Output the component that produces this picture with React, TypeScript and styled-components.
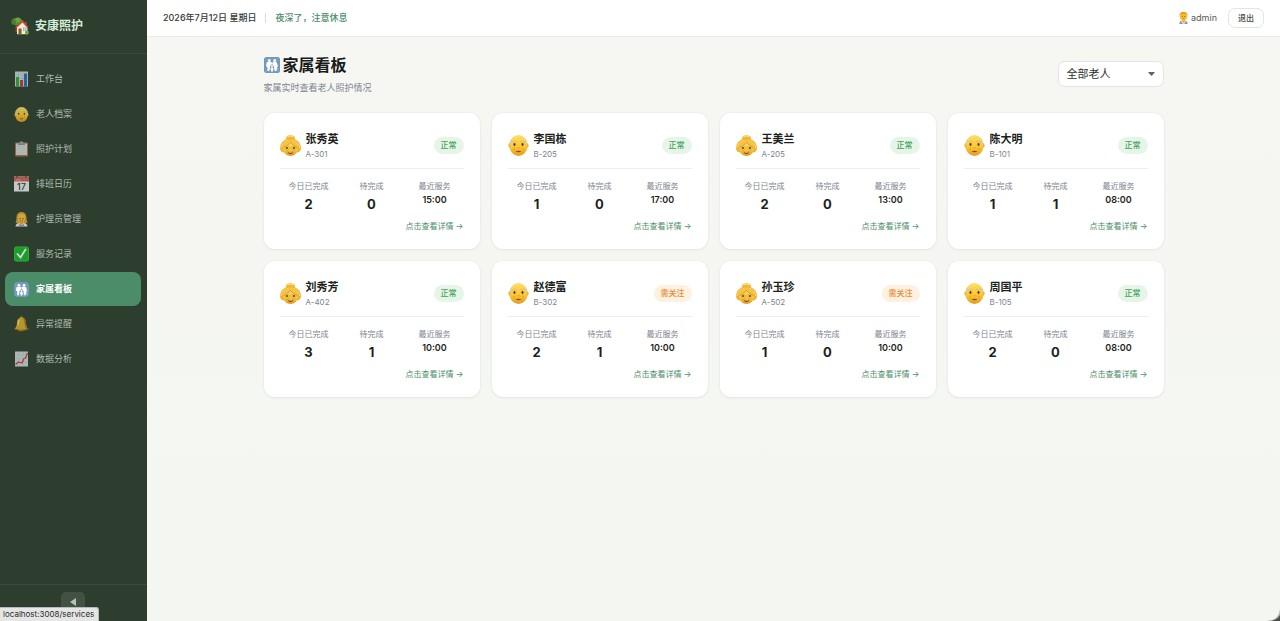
import React, { useId, useState } from "react";
import styled, { createGlobalStyle } from "styled-components";

const GlobalStyle = createGlobalStyle`
  *, *::before, *::after { box-sizing: border-box; }
  body {
    margin: 0;
    font-family: Inter, "Noto Sans CJK SC", sans-serif;
    font-size: 9px;
    line-height: 12px;
    color: #1c1f1c;
    background: #f5f6f1;
  }
  button, select { font-family: inherit; }
  h1, h2, p, dl, dd { margin: 0; padding: 0; }
`;

const Shell = styled.div`
  display: flex;
  min-height: 100vh;
`;

const Sidebar = styled.aside`
  display: flex;
  flex-direction: column;
  flex: none;
  width: 147px;
  background: #2d3e2e;
`;

const Brand = styled.div`
  display: flex;
  align-items: center;
  gap: 6px;
  height: 54px;
  padding: 0 11px 2px;
  border-bottom: 1px solid #3a4a3b;
  color: #d4ecd9;
  font-size: 12px;
  font-weight: 600;
  line-height: 18px;
`;

const NavList = styled.nav`
  display: flex;
  flex: 1;
  flex-direction: column;
  gap: 1px;
  padding: 8px 6px 8px 5px;
`;

const NavLink = styled.a<{ $active: boolean }>`
  display: flex;
  align-items: center;
  gap: 7px;
  height: 34px;
  padding: 0 9px;
  border-radius: 8px;
  background: ${(p) => (p.$active ? "#4b8c69" : "transparent")};
  color: ${(p) => (p.$active ? "#ffffff" : "#b2bab2")};
  font-weight: ${(p) => (p.$active ? 700 : 400)};
  text-decoration: none;

  svg { opacity: ${(p) => (p.$active ? 1 : 0.8)}; }
`;

const SidebarFooter = styled.div`
  display: flex;
  justify-content: center;
  padding: 7px 9px 9px 8px;
  border-top: 1px solid #3a4a3b;
`;

const CollapseButton = styled.button`
  display: flex;
  align-items: center;
  justify-content: center;
  width: 24px;
  height: 20px;
  padding: 0;
  border: 0;
  border-radius: 5px;
  background: #425142;
  color: #b9c1b9;
`;

const Page = styled.div`
  display: flex;
  flex: 1;
  flex-direction: column;
  min-width: 0;
`;

const TopBar = styled.header`
  display: flex;
  align-items: center;
  justify-content: space-between;
  height: 37px;
  padding: 0 16px 1px;
  border-bottom: 1px solid #ebece7;
  background: #ffffff;
`;

const TopGroup = styled.div<{ $gap: number }>`
  display: flex;
  align-items: center;
  gap: ${(p) => p.$gap}px;
`;

const DateText = styled.time`
  color: #353a36;
  font-weight: 500;
`;

const Separator = styled.span`
  width: 1px;
  height: 10px;
  background: #dcded9;
`;

const Greeting = styled.span`
  color: #4b8c69;
  font-weight: 500;
`;

const User = styled.span`
  display: flex;
  align-items: center;
  gap: 2px;
  color: #555b56;
`;

const LogoutButton = styled.button`
  height: 20px;
  padding: 0 9px;
  border: 1px solid #e4e5e0;
  border-radius: 7px;
  background: #ffffff;
  color: #454a46;
  font-size: 8px;
  font-weight: 500;
  line-height: 12px;
`;

const Main = styled.main`
  flex: 1;
  padding: 16px;
  background: linear-gradient(180deg, #f6f6f2, #f4f7f1);
`;

const Content = styled.div`
  max-width: 900px;
  margin: 0 auto;
`;

const PageHeader = styled.div`
  display: flex;
  align-items: center;
  justify-content: space-between;
  margin-bottom: 18px;
`;

const Title = styled.h1`
  display: flex;
  align-items: center;
  gap: 3px;
  color: #181b18;
  font-size: 16px;
  font-weight: 700;
  line-height: 24px;
`;

const Subtitle = styled.p`
  margin-top: 4px;
  color: #7c8490;
  line-height: 14px;
`;

const SelectBox = styled.div`
  position: relative;
  width: 106px;

  svg {
    position: absolute;
    top: 11px;
    right: 9px;
    pointer-events: none;
  }
`;

const Select = styled.select`
  appearance: none;
  width: 100%;
  height: 26px;
  padding: 0 24px 0 8px;
  border: 1px solid #e4e5e0;
  border-radius: 7px;
  background: #ffffff;
  color: #2e332f;
  font-size: 11px;
`;

const CardGrid = styled.section`
  display: grid;
  grid-template-columns: repeat(auto-fill, minmax(200px, 1fr));
  gap: 12px;
`;

const Card = styled.article`
  padding: 17px 16px;
  border-radius: 11px;
  background: #ffffff;
  box-shadow: 0 0 0 1px rgba(40, 60, 40, 0.02), 0 1px 3px rgba(40, 60, 40, 0.07);
`;

const CardHeader = styled.div`
  display: flex;
  align-items: center;
  gap: 5px;
  padding-bottom: 8px;
  border-bottom: 1px solid #eff0ee;
`;

const Identity = styled.div`
  flex: 1;
`;

const ElderName = styled.h2`
  color: #1c1f1c;
  font-size: 11px;
  font-weight: 600;
  line-height: 18px;
`;

const Room = styled.p`
  color: #7c8490;
  font-size: 8px;
`;

const Badge = styled.span<{ $alert: boolean }>`
  padding: 2px 7px 3px;
  border-radius: 9px;
  background: ${(p) => (p.$alert ? "#fff1e0" : "#e7f5e9")};
  color: ${(p) => (p.$alert ? "#ea8a35" : "#41a35a")};
  font-size: 8px;
  font-weight: 500;
`;

const Stats = styled.dl`
  display: grid;
  grid-template-columns: repeat(3, 1fr);
  gap: 5px;
  margin-top: 11px;
  text-align: center;
`;

const StatLabel = styled.dt`
  color: #7c8490;
  font-size: 8px;
`;

const StatValue = styled.dd<{ $time?: boolean }>`
  margin-top: 3px;
  color: #1c1f1c;
  font-size: ${(p) => (p.$time ? 9 : 13)}px;
  font-weight: ${(p) => (p.$time ? 600 : 700)};
  line-height: ${(p) => (p.$time ? 10 : 18)}px;
`;

const DetailRow = styled.div`
  display: flex;
  justify-content: flex-end;
  margin-top: 7px;
`;

const DetailLink = styled.a`
  color: #4b8c69;
  font-size: 8px;
  text-decoration: none;
`;

const StatusUrl = styled.div`
  position: fixed;
  bottom: 0;
  left: 0;
  padding: 0 4px 1px 3px;
  border: 1px solid #b9bbb9;
  border-width: 1px 1px 0 0;
  border-radius: 0 3px 0 0;
  background: #e4e5e4;
  color: #2b2d2b;
  font-size: 8px;
`;

const WindowCorner = styled.svg`
  position: fixed;
  right: 0;
  bottom: 0;
`;

const HouseIcon = () => (
  <svg width="18" height="18" viewBox="0 0 36 36" aria-hidden="true">
    <path d="M9 16h4v14H9z" fill="#79512f" />
    <ellipse cx="12" cy="9" rx="11" ry="7.500" fill="#568d31" />
    <circle cx="5" cy="11" r="4.500" fill="#477e2b" />
    <circle cx="14" cy="6" r="5" fill="#6ba343" />
    <path d="M28 10h3v9h-3z" fill="#a9533d" />
    <path d="M12 20L23 9l10 11v14H12z" fill="#f6ead0" />
    <path d="M9 20L22 7q1-1 2 0l11 13-2 2L23 11 11 22z" fill="#c94734" />
    <path d="M15 23h6v11h-6z" fill="#925231" />
    <path d="M24 21h7v7h-7z" fill="#70aecf" />
    <path d="M27.500 21v7M24 24.500h7" stroke="#fff" />
    <circle cx="32" cy="31" r="4" fill="#6fa83a" />
    <path d="M12 34h22v1H12z" fill="#729452" />
  </svg>
);

const BarsIcon = () => (
  <svg width="15" height="16" viewBox="0 0 30 32" aria-hidden="true">
    <path d="M2 1h26v30H2z" fill="#c7d3d8" />
    <path d="M2 8h26M2 15h26M2 22h26M9 1v30M18 1v30" stroke="#aab9c0" />
    <path d="M4 12h6v19H4z" fill="#2eaa37" />
    <path d="M12 18h6v13h-6z" fill="#c93737" />
    <path d="M20 5h6v26h-6z" fill="#286bb6" />
  </svg>
);

const FaceGradient = ({ id }: { id: string }) => (
  <defs>
    <linearGradient id={id} x1="0" y1="0" x2="0" y2="1">
      <stop offset="0" stopColor="#ffdf66" />
      <stop offset="0.6" stopColor="#fcc431" />
      <stop offset="1" stopColor="#e09a20" />
    </linearGradient>
  </defs>
);

const OldManIcon = ({ size }: { size: number }) => {
  const id = useId();
  return (
    <svg width={size} height={size} viewBox="0 0 42 42" aria-hidden="true">
      <FaceGradient id={id} />
      <ellipse cx="3.500" cy="21" rx="2.500" ry="4.500" fill="#e5a526" />
      <ellipse cx="38.500" cy="21" rx="2.500" ry="4.500" fill="#e5a526" />
      <rect x="3" y="0" width="36" height="42" rx="18" ry="20" fill={`url(#${id})`} />
      <path d="M4 21q-2-9 4-13 1 6-3 13zM38 21q2-9-4-13-1 6 3 13z" fill="#d9cda4" />
      <path d="M9 14q4-3 8-1M25 13q4-2 8 1" fill="none" stroke="#d8bf7c" strokeWidth="2" strokeLinecap="round" />
      <ellipse cx="13" cy="19" rx="2" ry="2.800" fill="#4d3517" />
      <ellipse cx="29" cy="19" rx="2" ry="2.800" fill="#4d3517" />
      <path d="M19 25q2 2 4 0M11 29q1-3 3-4M31 29q-1-3-3-4" fill="none" stroke="#cd8b1d" strokeWidth="1.300" />
      <path d="M15 33q6-3 12 0-6 3-12 0z" fill="#8b4a1c" />
    </svg>
  );
};

const OldWomanIcon = () => {
  const id = useId();
  return (
    <svg width="21" height="21" viewBox="0 0 42 42" aria-hidden="true">
      <FaceGradient id={id} />
      <ellipse cx="21" cy="6" rx="9" ry="5.500" fill="#f0b733" />
      <path d="M14 4q7-4 14 0" fill="none" stroke="#ffe484" strokeWidth="2" />
      <path d="M21 7C8 7 0 16 0 26c0 6 4 9 9 9h24c5 0 9-3 9-9C42 16 34 7 21 7z" fill="#f0b331" />
      <path d="M2 26q2-12 15-16M40 26Q38 14 25 10" fill="none" stroke="#ffdc72" strokeWidth="2" />
      <ellipse cx="21" cy="27" rx="15" ry="15" fill={`url(#${id})`} />
      <path d="M5 25q1-13 16-16 15 3 16 16-9-3-16-10-7 7-16 10z" fill="#f6c445" />
      <path d="M7 25q8-3 14-10 6 7 14 10" fill="none" stroke="#cf8c20" strokeWidth="1.500" />
      <g fill="none" stroke="#b9a576" strokeWidth="1">
        <circle cx="14" cy="26" r="4.500" />
        <circle cx="28" cy="26" r="4.500" />
        <path d="M18.500 26q2.500-2 5 0" />
      </g>
      <ellipse cx="14" cy="26" rx="1.800" ry="2.200" fill="#4a3119" />
      <ellipse cx="28" cy="26" rx="1.800" ry="2.200" fill="#4a3119" />
      <path d="M15 33q6 2 12 0-1 5-6 5t-6-5z" fill="#8a3a1e" />
      <path d="M17 34q4 1 8 0v1q-4 1-8 0z" fill="#fff" />
    </svg>
  );
};

const ClipboardIcon = () => (
  <svg width="15" height="16" viewBox="0 0 30 32" aria-hidden="true">
    <rect x="2" y="3" width="26" height="28" rx="2" fill="#a9713c" />
    <path d="M4 5h22v23H4z" fill="#d3d7d6" />
    <path d="M7 11h16M7 15h16M7 19h16M7 23h16" stroke="#c1c6c6" />
    <path d="M9 3h3q0-3 3-3t3 3h3l1 5H8z" fill="#858d91" />
    <path d="M11 4h8" stroke="#d8dddf" />
  </svg>
);

const CalendarIcon = () => (
  <svg width="15" height="16" viewBox="0 0 30 32" aria-hidden="true">
    <path d="M0 1h30v30H0z" fill="#eceeed" />
    <path d="M0 1h30v10H0z" fill="#c9625a" />
    <path d="M6 0v4M24 0v4" stroke="#6e4b48" strokeWidth="3" />
    <path d="M4 8h9" stroke="#e3a09a" strokeWidth="2" />
    <text x="15" y="28" textAnchor="middle" fontFamily="Inter, sans-serif" fontSize="18" fontWeight="500" fill="#303634">17</text>
  </svg>
);

const NurseIcon = () => (
  <svg width="15" height="16" viewBox="0 0 30 32" aria-hidden="true">
    <path d="M15 2C8 2 5 7 5 13q0 6-2 10 6 4 12 3 6 1 12-3-2-4-2-10c0-6-3-11-10-11z" fill="#d99a2b" />
    <path d="M3 31q0-6 7-7h10q7 1 7 7z" fill="#e9ecef" />
    <path d="M12 21h6v4l-3 3-3-3z" fill="#e3a726" />
    <path d="M10 25l5 4 5-4-1 6h-8z" fill="#a874b5" />
    <ellipse cx="15" cy="15" rx="7" ry="8.500" fill="#fbc83c" />
    <path d="M7 15Q7 5 15 5t8 10q-5-2-7-7-3 5-9 7z" fill="#eebd4c" />
    <circle cx="12" cy="15.500" r="1.300" fill="#58401d" />
    <circle cx="18" cy="15.500" r="1.300" fill="#58401d" />
    <path d="M12 19.500q3 2 6 0" stroke="#a44625" fill="none" strokeWidth="1.500" />
  </svg>
);

const CheckIcon = () => (
  <svg width="15" height="16" viewBox="0 0 30 32" aria-hidden="true">
    <rect y="1" width="30" height="30" rx="5" fill="#17b52b" />
    <rect x="1" y="2" width="28" height="28" rx="4" fill="none" stroke="#4bd150" />
    <path d="M7 16l6 7L23 7" fill="none" stroke="#fff" strokeWidth="3.500" strokeLinecap="round" />
  </svg>
);

const FamilyIcon = ({ size }: { size: number }) => (
  <svg width={size} height={size} viewBox="0 0 32 32" aria-hidden="true">
    <rect width="32" height="32" rx="6" fill="#557c9f" />
    <rect x="1.500" y="1.500" width="29" height="29" rx="5" fill="#7199bd" stroke="#9dbfd9" />
    <g fill="#fff">
      <circle cx="10.500" cy="7" r="3" />
      <circle cx="21.500" cy="7" r="3" />
      <path d="M5 12q0-2 2-2h7q2 0 2 2l-1 6-3 2-1 8H7l-.5-9L4 19zM16.500 12q0-2 2-2h5q2 0 2.500 2l2 7-2 1 1 5h-2v3h-4l-1-8-3-2z" />
    </g>
    <path d="M11.500 28l1-10q3-5 7 0l1 10z" fill="#7199bd" />
    <g fill="#fff">
      <circle cx="16" cy="18.500" r="2" />
      <path d="M14 21h4l1.500 4h-1.500v4h-4v-4h-1.500z" />
    </g>
  </svg>
);

const BellIcon = () => (
  <svg width="15" height="16" viewBox="0 0 30 32" aria-hidden="true">
    <circle cx="15" cy="3" r="2.500" fill="#b88016" />
    <ellipse cx="14" cy="28" rx="4" ry="3" fill="#8d6018" />
    <path d="M15 3c-6 0-9 4-9 10 0 6-2 10-5 13 8 4 20 4 28 0-4-3-5-7-5-13S21 3 15 3z" fill="#d9ad2b" />
    <path d="M18 5c4 4 3 15 7 21l4 0c-4-3-5-7-5-13 0-5-2-8-6-8z" fill="#9c6e1b" />
    <path d="M10 8q-2 5-2 10" stroke="#fff09a" strokeWidth="2" fill="none" />
    <path d="M1 26q14 5 28 0" fill="none" stroke="#8f6218" strokeWidth="1.500" />
  </svg>
);

const TrendIcon = () => (
  <svg width="15" height="16" viewBox="0 0 30 32" aria-hidden="true">
    <path d="M2 1h26v30H2z" fill="#cbd6d9" />
    <path d="M2 8h26M2 15h26M2 22h26M9 1v30M18 1v30" stroke="#b4c2c7" />
    <path d="M3 27l6-5 7 2 4-9 3-1 4-10" fill="none" stroke="#cb3838" strokeWidth="2.500" strokeLinejoin="round" />
  </svg>
);

const StaffIcon = () => (
  <svg width="11" height="12" viewBox="0 0 22 24" aria-hidden="true">
    <path d="M2 24q0-6 5-7h8q5 1 5 7z" fill="#d5dadd" />
    <path d="M3 24q0-4 3-6l3 6zM19 24q0-4-3-6l-3 6z" fill="#8b979d" />
    <path d="M8 14h6v4l-3 3-3-3z" fill="#efa91e" />
    <ellipse cx="11" cy="8.500" rx="7.500" ry="8.500" fill="#ffc12f" />
    <path d="M3 8Q3 0 11 0t8 8q-2-4-4-4-4 1-8 0-2 1-4 4z" fill="#e39d1f" />
    <circle cx="8.500" cy="8.500" r="1" fill="#54401d" />
    <circle cx="13.500" cy="8.500" r="1" fill="#54401d" />
    <path d="M8.500 12q2.500 2 5 0" fill="none" stroke="#a34b22" />
  </svg>
);

const navItems = [
  { label: "工作台", path: "/", icon: <BarsIcon /> },
  { label: "老人档案", path: "/elders", icon: <OldManIcon size={15} /> },
  { label: "照护计划", path: "/plans", icon: <ClipboardIcon /> },
  { label: "排班日历", path: "/schedule", icon: <CalendarIcon /> },
  { label: "护理员管理", path: "/caregivers", icon: <NurseIcon /> },
  { label: "服务记录", path: "/services", icon: <CheckIcon /> },
  { label: "家属看板", path: "/family", icon: <FamilyIcon size={15} /> },
  { label: "异常提醒", path: "/alerts", icon: <BellIcon /> },
  { label: "数据分析", path: "/analytics", icon: <TrendIcon /> },
];

interface Elder {
  name: string;
  room: string;
  female: boolean;
  alert: boolean;
  done: number;
  pending: number;
  last: string;
}

const elders: Elder[] = [
  { name: "张秀英", room: "A-301", female: true, alert: false, done: 2, pending: 0, last: "15:00" },
  { name: "李国栋", room: "B-205", female: false, alert: false, done: 1, pending: 0, last: "17:00" },
  { name: "王美兰", room: "A-205", female: true, alert: false, done: 2, pending: 0, last: "13:00" },
  { name: "陈大明", room: "B-101", female: false, alert: false, done: 1, pending: 1, last: "08:00" },
  { name: "刘秀芳", room: "A-402", female: true, alert: false, done: 3, pending: 1, last: "10:00" },
  { name: "赵德富", room: "B-302", female: false, alert: true, done: 2, pending: 1, last: "10:00" },
  { name: "孙玉珍", room: "A-502", female: true, alert: true, done: 1, pending: 0, last: "10:00" },
  { name: "周国平", room: "B-105", female: false, alert: false, done: 2, pending: 0, last: "08:00" },
];

const ElderCard = ({ elder }: { elder: Elder }) => (
  <Card>
    <CardHeader>
      {elder.female ? <OldWomanIcon /> : <OldManIcon size={21} />}
      <Identity>
        <ElderName>{elder.name}</ElderName>
        <Room>{elder.room}</Room>
      </Identity>
      <Badge $alert={elder.alert}>{elder.alert ? "需关注" : "正常"}</Badge>
    </CardHeader>
    <Stats>
      <div>
        <StatLabel>今日已完成</StatLabel>
        <StatValue>{elder.done}</StatValue>
      </div>
      <div>
        <StatLabel>待完成</StatLabel>
        <StatValue>{elder.pending}</StatValue>
      </div>
      <div>
        <StatLabel>最近服务</StatLabel>
        <StatValue $time>{elder.last}</StatValue>
      </div>
    </Stats>
    <DetailRow>
      <DetailLink href={`/family/${elder.room}`}>点击查看详情 →</DetailLink>
    </DetailRow>
  </Card>
);

export default function App() {
  const [selected, setSelected] = useState("");
  const shown = elders.filter((e) => !selected || e.room === selected);

  return (
    <>
      <GlobalStyle />
      <Shell>
        <Sidebar>
          <Brand>
            <HouseIcon />
            安康照护
          </Brand>
          <NavList>
            {navItems.map((item) => (
              <NavLink key={item.path} href={item.path} $active={item.path === "/family"}>
                {item.icon}
                {item.label}
              </NavLink>
            ))}
          </NavList>
          <SidebarFooter>
            <CollapseButton type="button" aria-label="收起菜单">
              <svg width="6" height="8" viewBox="0 0 6 8" aria-hidden="true">
                <path d="M6 0v8L0 4z" fill="currentColor" />
              </svg>
            </CollapseButton>
          </SidebarFooter>
        </Sidebar>
        <Page>
          <TopBar>
            <TopGroup $gap={9}>
              <DateText dateTime="2026-07-12">2026年7月12日 星期日</DateText>
              <Separator />
              <Greeting>夜深了，注意休息</Greeting>
            </TopGroup>
            <TopGroup $gap={11}>
              <User>
                <StaffIcon />
                admin
              </User>
              <LogoutButton type="button">退出</LogoutButton>
            </TopGroup>
          </TopBar>
          <Main>
            <Content>
              <PageHeader>
                <div>
                  <Title>
                    <FamilyIcon size={16} />
                    家属看板
                  </Title>
                  <Subtitle>家属实时查看老人照护情况</Subtitle>
                </div>
                <SelectBox>
                  <Select aria-label="选择老人" value={selected} onChange={(e) => setSelected(e.target.value)}>
                    <option value="">全部老人</option>
                    {elders.map((e) => (
                      <option key={e.room} value={e.room}>{e.name}</option>
                    ))}
                  </Select>
                  <svg width="7" height="4" viewBox="0 0 7 4" aria-hidden="true">
                    <path d="M0.500 0h6q.5.3 0 .8L4 3.500q-.5.5-1 0L.5.800Q0 .3.500 0z" fill="#596472" />
                  </svg>
                </SelectBox>
              </PageHeader>
              <CardGrid>
                {shown.map((elder) => (
                  <ElderCard key={elder.room} elder={elder} />
                ))}
              </CardGrid>
            </Content>
          </Main>
        </Page>
      </Shell>
      <StatusUrl role="status">localhost:3008/services</StatusUrl>
      <WindowCorner width="16" height="16" viewBox="0 0 16 16" aria-hidden="true">
        <path d="M16 3v13H2Q15 16 16 3z" fill="#b5b7b3" />
        <path d="M16 10v6H3q10 0 13-6z" fill="#4b4d4b" />
      </WindowCorner>
    </>
  );
}
